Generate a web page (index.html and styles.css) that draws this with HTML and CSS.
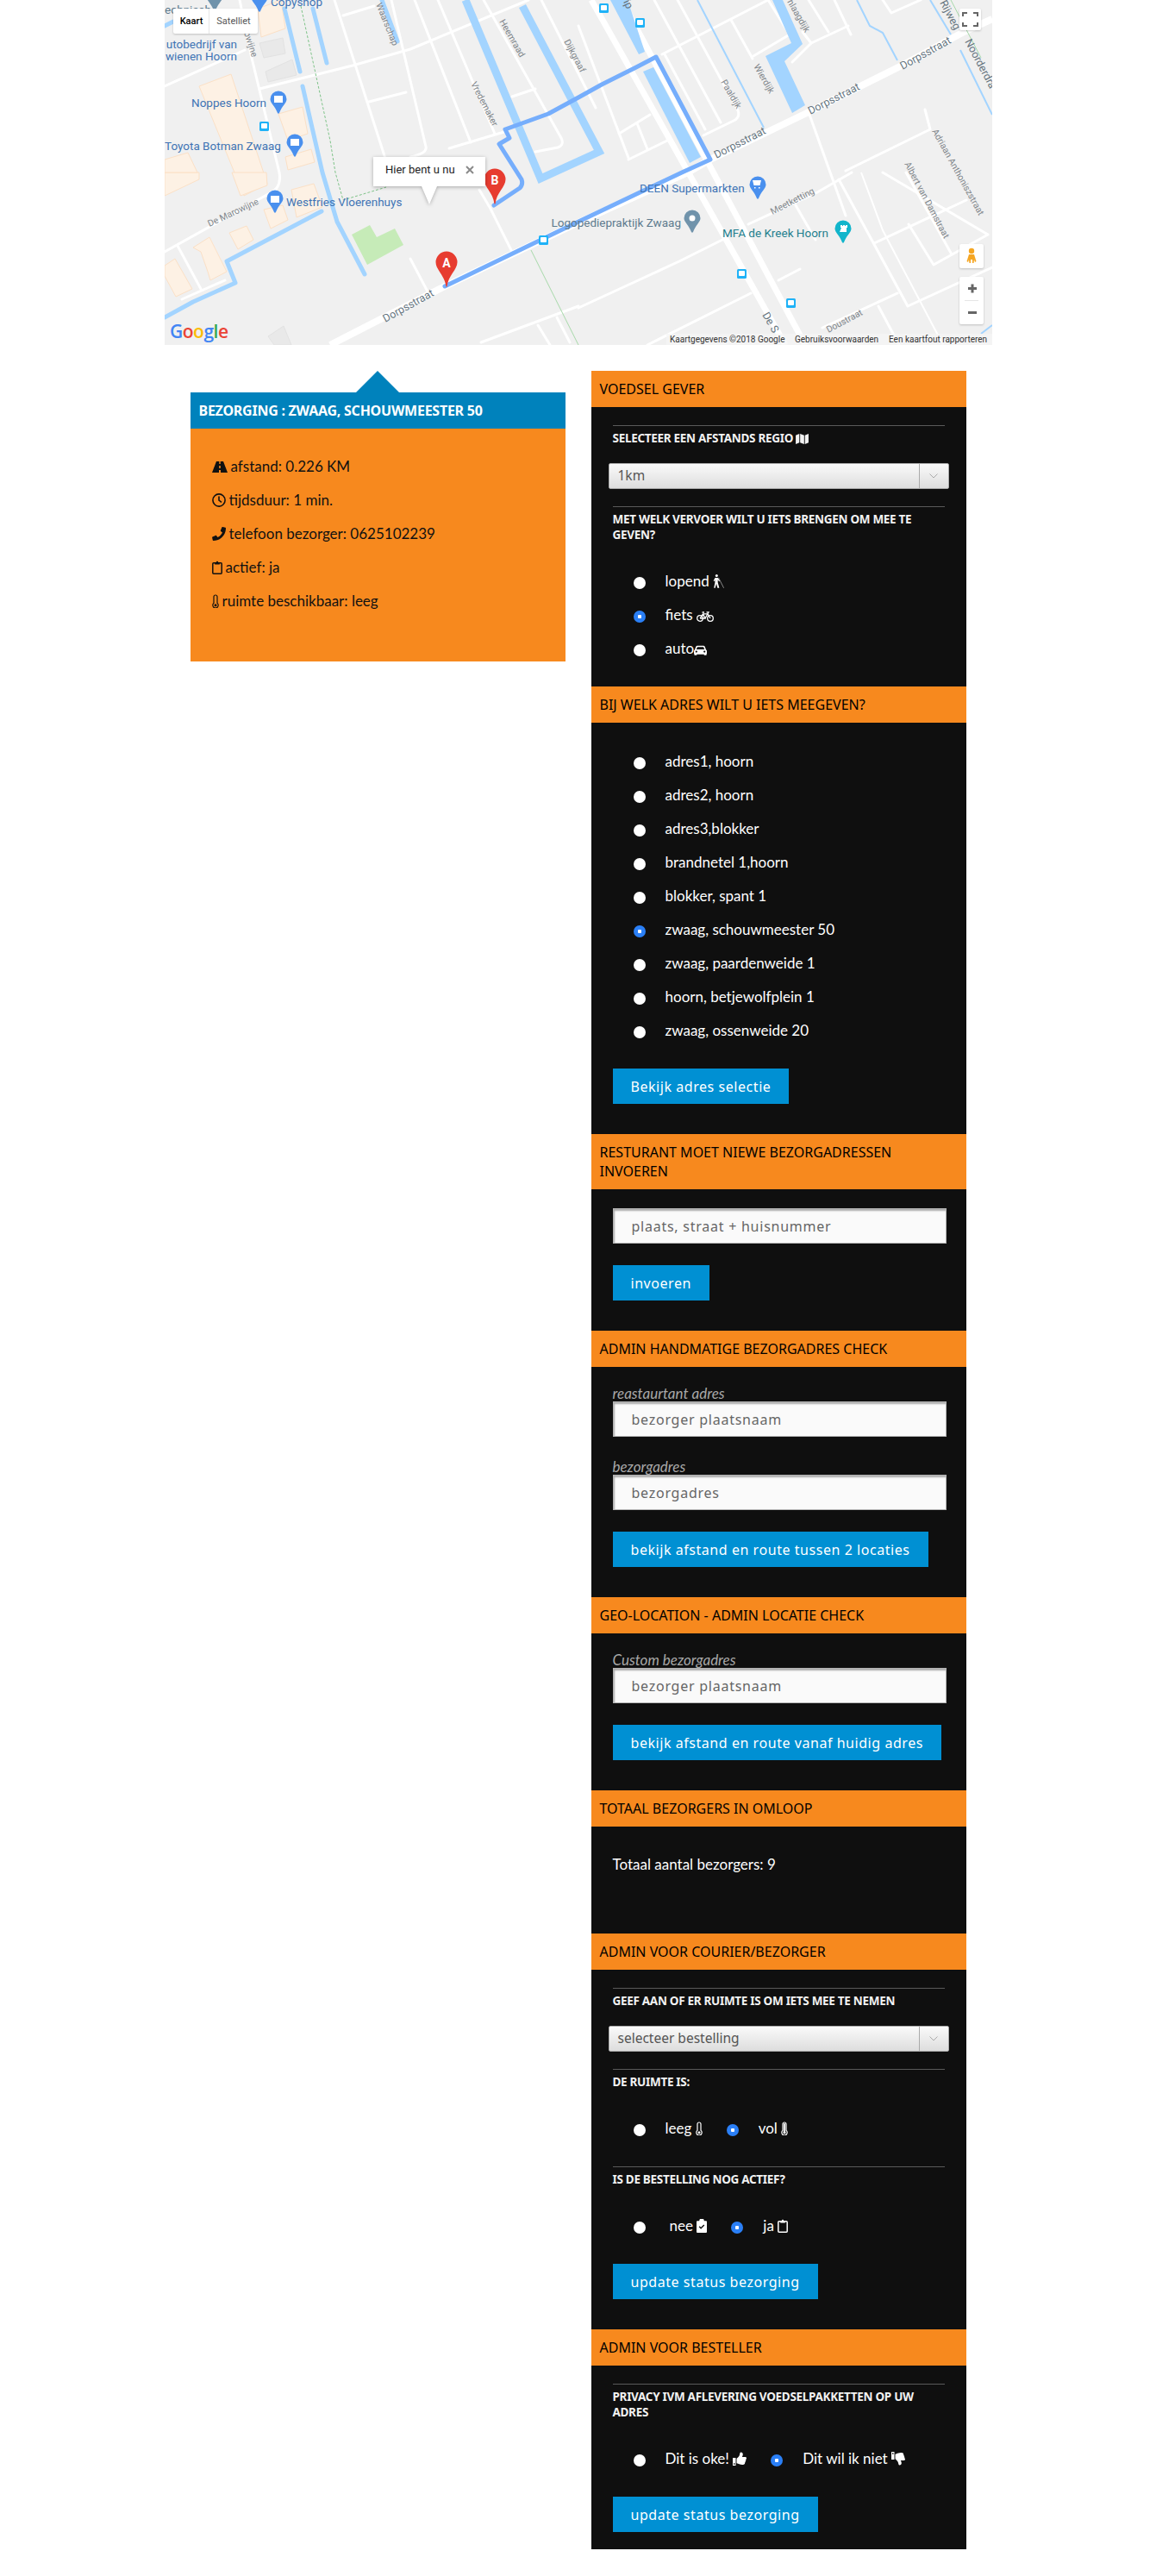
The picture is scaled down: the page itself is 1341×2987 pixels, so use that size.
FILE: index.html
```html
<!DOCTYPE html>
<html lang="en">
<head>
    <meta charset="UTF-8">
    <meta name="viewport" content="width=device-width, initial-scale=1.0">
    <title>Voedsel gever</title>
    <link rel="stylesheet" href="styles.css">
</head>

<body>
    <!-- icon set -->
    <svg class="icon-defs" aria-hidden="true">
        <symbol id="i-road" viewBox="0 0 18 14"><path fill-rule="evenodd" d="M5 1h8l5 13H0zM8.3 1v3h1.4V1zM8.2 6v3h1.6V6zM8 11v3h2v-3z"/></symbol>
        <symbol id="i-clock" viewBox="0 0 16 16"><circle cx="8" cy="8" r="7.1" fill="none" stroke="currentColor" stroke-width="1.6"/><path d="M8 3.6v4.6l3 2.1" fill="none" stroke="currentColor" stroke-width="1.6"/></symbol>
        <symbol id="i-phone" viewBox="0 0 16 16"><path d="M15.5.8 12.3.1c-.4-.1-.7.1-.9.4L9.9 4c-.1.3-.1.7.2.9l1.9 1.6c-1.1 2.4-3.1 4.4-5.5 5.5l-1.6-1.9c-.2-.3-.6-.3-.9-.2L.5 11.4c-.3.2-.5.5-.4.9l.7 3.2c.1.3.4.5.7.5C9.5 16 16 9.5 16 1.5c0-.3-.2-.6-.5-.7z"/></symbol>
        <symbol id="i-clipboard" viewBox="0 0 12 16"><rect x=".8" y="2.8" width="10.4" height="12.4" rx="1" fill="none" stroke="currentColor" stroke-width="1.5"/><path d="M3.2 2h1.6a1.2 1.2 0 0 1 2.4 0h1.6v2.4H3.2z"/></symbol>
        <symbol id="i-clipboard-check" viewBox="0 0 12 16"><path fill-rule="evenodd" d="M1 2.2h2.2a2.8 2.8 0 0 1 5.6 0H11a1 1 0 0 1 1 1V15a1 1 0 0 1-1 1H1a1 1 0 0 1-1-1V3.2a1 1 0 0 1 1-1zM2.700 9.300l2.400 2.500 4.200-4.300-1-1-3.200 3.200-1.400-1.400z"/></symbol>
        <symbol id="i-temp" viewBox="0 0 8 16"><path d="M2 3a2 2 0 0 1 4 0v7.300a3.200 3.200 0 1 1-4 0z" fill="none" stroke="currentColor" stroke-width="1.2"/><circle cx="4" cy="12.700" r="1.5"/></symbol>
        <symbol id="i-temp-full" viewBox="0 0 8 16"><path d="M2 3a2 2 0 0 1 4 0v7.300a3.200 3.200 0 1 1-4 0z" fill="none" stroke="currentColor" stroke-width="1.2"/><circle cx="4" cy="12.700" r="1.6"/><rect x="3.1" y="2.2" width="1.8" height="10"/></symbol>
        <symbol id="i-map" viewBox="0 0 16 14"><path d="M0 3 4.5 1v11L0 14zM5.5 1l5 2v11l-5-2zM11.500 3 16 1v11l-4.500 2z"/></symbol>
        <symbol id="i-blind" viewBox="0 0 13 16"><circle cx="4.3" cy="1.6" r="1.5"/><path d="M2.500 4h3.300l2.300 3.700-.9.6-1.500-2v3.200l1.700 6.200H5.300L4 10.800 2.700 15.700H1.200l1.200-6.300V6.500L1.500 8 .6 7.400z"/><path d="M6.500 3.800 12.600 15.800" fill="none" stroke="currentColor" stroke-width=".5"/></symbol>
        <symbol id="i-bicycle" viewBox="0 0 20 12"><g fill="none" stroke="currentColor" stroke-width="1.3"><circle cx="4" cy="8" r="3.3"/><circle cx="16" cy="8" r="3.3"/><path d="M4 8 7.500 2.800H13L16 8M7.500 2.800 10 8H4M6.500 1H9M11.500 .8H14L13 2.800M10 8 13 2.800"/></g></symbol>
        <symbol id="i-car" viewBox="0 0 16 12"><path fill-rule="evenodd" d="M1 5.500 2.500 1.500C2.800.8 3.400.4 4.200.4h7.600c.8 0 1.400.4 1.700 1.100L15 5.500c.6.300 1 .9 1 1.500v3c0 .4-.2.7-.5.900V12h-3v-1h-9v1h-3v-1.100C.2 10.700 0 10.400 0 10V7c0-.6.400-1.200 1-1.500zM3 5h10l-1-2.600c-.1-.3-.4-.4-.7-.4H4.700c-.3 0-.6.100-.7.400zM3 6.500a1.200 1.200 0 1 0 0 2.400 1.200 1.200 0 0 0 0-2.400zM13 6.500a1.200 1.200 0 1 0 0 2.400 1.200 1.200 0 0 0 0-2.400z"/></symbol>
        <symbol id="i-thumb" viewBox="0 0 16 16"><path fill-rule="evenodd" d="M0 7h3.500v9H0zM1 13.300v1.400h1.500v-1.400z"/><path d="M4.500 8.500c0-.5.200-.9.600-1.200C6.500 6 7.700 4.800 8 3.200 8.200 2 8.400.4 9.500.4c1.400 0 2.300 1 2.300 2.500 0 1-.5 2-1 3H14.500c.9 0 1.500.7 1.500 1.500 0 .6-.3 1.100-.8 1.400.3.800.1 1.600-.5 2 .2.800 0 1.500-.6 2 .1 1.300-.7 2.200-2.300 2.200H11c-2 0-3.800-.8-5-1.200-.9-.2-1.500-.4-1.500-1z"/></symbol>
        <symbol id="i-pin" viewBox="0 0 20 27"><path d="M10 .5A9.500 9.500 0 0 1 19.500 10C19.500 14.500 14.500 17 10.800 26.500H9.200C5.500 17 .5 14.500.5 10A9.500 9.500 0 0 1 10 .5z"/></symbol>
        <symbol id="i-marker" viewBox="0 0 26 42"><path d="M13 .5A12.500 12.500 0 0 1 25.500 13C25.500 22 15 28 13.500 41.500h-1C11 28 .5 22 .5 13A12.500 12.500 0 0 1 13 .5z"/></symbol>
    </svg>

    <div id="page">
        <!-- google map, everything in here has its own place on the canvas -->
        <svg class="map" viewBox="0 0 960 400" role="img" aria-label="Kaart">
            <rect class="map-bg" width="960" height="400"/>

            <g class="building">
                <path d="M40 100 77 86 119 213 92 227z"/>
                <path d="M132 132 160 124 166 155 143 163z"/>
                <path d="M140 182 170 173 174 188 143 197z"/>
                <path d="M108 10 135 0 140 33 112 43z"/>
                <path d="M78 200H118L119 215 88 227z"/>
                <path d="M0 200H40V208L0 227z"/>
                <path d="M0 185 27 177 38 200H0z"/>
                <path d="M147 220 173 213 183 240 153 252z"/>
                <path d="M115 243 137 238 143 255 123 265z"/>
                <path d="M75 270 95 262 103 278 85 289z"/>
                <path d="M33 287 52 275 72 315 53 325 50 315 42 292z"/>
                <path d="M0 308 12 300 32 335 13 344 0 320z"/>
            </g>
            <g class="building-grey">
                <path d="M110 50 137 44 140 62 115 67z"/>
                <path d="M117 83 148 69 153 87 120 95z"/>
                <path d="M120 390 138 378 147 400H127z"/>
            </g>
            <path class="park" d="M217 272 238 261 246 275 267 265 277 284 235 307z"/>

            <g class="road">
                <path d="M0 100 93 58"/>
                <path d="M110 103 218 76 285 57 422 0"/>
                <path d="M197 0 257 187"/>
                <path d="M263 0 303 170Q305 178 285 182"/>
                <path d="M290 0 355 165"/>
                <path d="M317 0 383 155"/>
                <path d="M330 172 397 152"/>
                <path d="M237 118 280 107"/>
                <path d="M207 18 243 7"/>
                <path d="M87 0 100 63 133 200Q136 218 122 224L0 292"/>
                <path d="M15 285 42 335"/>
                <path d="M20 347 70 325"/>
                <path d="M370 0 460 160Q464 168 456 171L430 176"/>
                <path d="M403 112 430 103"/>
                <path d="M437 0 500 125"/>
                <path d="M577 63 700 0 725 40 683 65"/>
                <path d="M568 0 645 142"/>
                <path d="M595 0 665 128Q668 136 660 140L625 157"/>
                <path d="M580 63 627 150"/>
                <path d="M657 23 682 68"/>
                <path d="M480 30 538 183"/>
                <path d="M527 155 563 133"/>
                <path d="M538 185 583 163"/>
                <path d="M548 143 560 173"/>
                <path d="M747 0 770 37"/>
                <path d="M777 0 796 40"/>
                <path d="M728 72 750 50 793 30"/>
                <path d="M740 37 750 50"/>
                <path d="M833 0 843 15 877 0"/>
                <path d="M480 357 597 303 647 278"/>
                <path d="M560 400 680 340"/>
                <path d="M712 325 737 312"/>
                <path d="M677 260 757 223 797 200"/>
                <path d="M790 198 888 150 882 127"/>
                <path d="M732 238 755 278"/>
                <path d="M782 208 862 355 960 310"/>
                <path d="M833 200 955 272 892 307 863 260"/>
                <path d="M823 282 930 232"/>
                <path d="M860 200 913 295"/>
                <path d="M763 380 850 340"/>
                <path d="M828 355 852 400"/>
                <path d="M367 397 480 355"/>
                <path d="M433 377 447 400"/>
                <path d="M455 368 470 397"/>
                <path d="M285 300 305 338"/>
                <path d="M365 220 378 242 402 290"/>
                <path d="M747 130 790 250"/>
            </g>
            <path class="road-thin" d="M808 200 833 267 903 400"/>
            <g class="road-main">
                <path d="M192 400 325 332 480 258 607 200 633 185 747 130 857 75 927 37 960 22"/>
            </g>
            <g class="road-wide">
                <path d="M495 0 720 400"/>
                <path d="M530 0 743 400"/>
            </g>

            <g class="water">
                <path d="M517 0H537L557 60 550 63z"/>
                <path d="M555 83 567 78 622 182 609 189z"/>
                <path d="M705 0H717L740 51 719 71 743 122 728 131 697 65 727 50z"/>
            </g>
            <path class="water-canal" d="M349 0 436 207 504 176 415 7"/>
            <g class="water-line">
                <path d="M139 10 157 83"/>
                <path d="M172 10 188 73"/>
                <path d="M160 100 183 200 200 257 232 318"/>
                <path d="M252 0 270 48"/>
                <path d="M182 245 72 303 82 328 33 350 0 368"/>
                <path d="M0 30 10 25"/>
            </g>
            <g class="water-thin">
                <path d="M618 0 695 148"/>
                <path d="M803 0 818 30 833 38 850 70"/>
                <path d="M888 0 912 40"/>
                <path d="M923 58 960 133"/>
                <path d="M947 387 960 377"/>
            </g>

            <path class="trail" d="M158 7 192 163 198 200 207 232 257 217"/>
            <path class="rail" d="M425 290 480 400"/>
            <path class="rail" d="M912 0 947 67"/>

            <path class="route" d="M382 238 412 218Q416 214 414 208L388 167 400 160 395 150 445 132 480 113 507 98 547 78 570 66 633 185 600 200 480 257 325 332"/>

            <!-- bus stops -->
            <g class="bus">
                <rect x="110" y="141" width="11" height="11" rx="1.5"/>
                <rect x="504" y="4" width="11" height="11" rx="1.5"/>
                <rect x="546" y="21" width="11" height="11" rx="1.5"/>
                <rect x="434" y="273" width="11" height="11" rx="1.5"/>
                <rect x="664" y="312" width="11" height="11" rx="1.5"/>
                <rect x="721" y="346" width="11" height="11" rx="1.5"/>
            </g>
            <g class="bus-glyph">
                <rect x="112" y="143" width="7" height="6" rx="1"/>
                <rect x="506" y="6" width="7" height="6" rx="1"/>
                <rect x="548" y="23" width="7" height="6" rx="1"/>
                <rect x="436" y="275" width="7" height="6" rx="1"/>
                <rect x="666" y="314" width="7" height="6" rx="1"/>
                <rect x="723" y="348" width="7" height="6" rx="1"/>
            </g>

            <!-- street names -->
            <g class="street">
                <text transform="translate(52 263) rotate(-25)">De Marowijne</text>
                <text transform="translate(92 38) rotate(72)">bwijne</text>
                <text transform="translate(245 5) rotate(68)">Waarschap</text>
                <text transform="translate(388 25) rotate(60)">Heemraad</text>
                <text transform="translate(463 48) rotate(62)">Dijkgraaf</text>
                <text transform="translate(355 97) rotate(63)">Vredemaker</text>
                <text transform="translate(645 95) rotate(60)">Paaldijk</text>
                <text transform="translate(683 77) rotate(60)">Wierdijk</text>
                <text transform="translate(722 2) rotate(60)">hlaagdijk</text>
                <text transform="translate(890 152) rotate(61)">Adriaan Anthoniszstraat</text>
                <text transform="translate(858 190) rotate(62)">Albert van Damstraat</text>
                <text transform="translate(705 249) rotate(-27)">Meetketting</text>
                <text transform="translate(770 386) rotate(-28)">Doustraat</text>
                <text class="street-big" transform="translate(899 3) rotate(62)">Rijweg</text>
                <text class="street-big" transform="translate(928 48) rotate(62)">Noorderdra</text>
                <text class="street-big" transform="translate(693 365) rotate(60)">De S</text>
                <text class="street-big" transform="translate(532 2) rotate(65)">ip</text>
                <text class="street-big" transform="translate(640 184) rotate(-27)">Dorpsstraat</text>
                <text class="street-big" transform="translate(749 133) rotate(-27)">Dorpsstraat</text>
                <text class="street-big" transform="translate(856 81) rotate(-29)">Dorpsstraat</text>
                <text class="street-big" transform="translate(256 374) rotate(-29)">Dorpsstraat</text>
            </g>

            <!-- places -->
            <g class="poi">
                <text x="123" y="7">Copyshop</text>
                <text class="poi-end" x="84" y="56">utobedrijf van</text>
                <text class="poi-end" x="84" y="70">wienen Hoorn</text>
                <text x="31" y="124">Noppes Hoorn</text>
                <text x="0" y="174">Toyota Botman Zwaag</text>
                <text x="141" y="239">Westfries Vloerenhuys</text>
                <text x="551" y="223">DEEN Supermarkten</text>
                <text class="poi-end poi-grey" x="599" y="263">Logopediepraktijk Zwaag</text>
                <text class="poi-teal" x="647" y="275">MFA de Kreek Hoorn</text>
                <text class="poi-grey" x="0" y="16">echnisch</text>
            </g>
            <g class="pin">
                <use href="#i-pin" x="100" y="-13" width="20" height="27"/>
                <use href="#i-pin" x="122" y="105" width="20" height="27"/>
                <use href="#i-pin" x="141" y="155" width="20" height="27"/>
                <use href="#i-pin" x="118" y="220" width="20" height="27"/>
                <use href="#i-pin" x="678" y="204" width="20" height="27"/>
            </g>
            <use class="pin-grey" href="#i-pin" x="602" y="243" width="20" height="27"/>
            <use class="pin-grey" href="#i-pin" x="48" y="-14" width="20" height="27"/>
            <use class="pin-teal" href="#i-pin" x="777" y="255" width="20" height="27"/>
            <g class="pin-glyph">
                <path d="M127 111h10v8h-10z"/>
                <path d="M146 161h10v8h-10z"/>
                <path d="M123 227h10v8h-10z"/>
                <path d="M682 209h10l-1.500 6h-7zM684 217h1.500v1.500H684zM689 217h1.500v1.500H689z"/>
                <circle cx="612" cy="253" r="3.5"/>
                <path d="M783 269h8v-5h1v-3h-2v1h-1v-1h-2v1h-1v-1h-2v3h1z"/>
            </g>

            <!-- route markers -->
            <g class="marker">
                <use href="#i-marker" x="314" y="291" width="26" height="42"/>
                <use href="#i-marker" x="370" y="195" width="26" height="42"/>
            </g>
            <text class="marker-text" x="327" y="310">A</text>
            <text class="marker-text" x="383" y="214">B</text>

            <!-- info window -->
            <path class="info" d="M242 182H372V216H316L307 237 298 216H242z"/>
            <text class="info-text" x="256" y="201">Hier bent u nu</text>
            <path class="info-close" d="M350 193 358 201M358 193 350 201"/>

            <!-- controls -->
            <rect class="ctrl" x="10" y="10" width="98" height="29" rx="2"/>
            <path class="ctrl-line" d="M51.5 10V39"/>
            <text class="ctrl-on" x="31" y="28">Kaart</text>
            <text class="ctrl-off" x="80" y="28">Satelliet</text>

            <rect class="ctrl" x="922" y="10" width="25" height="25" rx="2"/>
            <path class="ctrl-icon" d="M926 19V15H931M938 15H943V19M943 26V30H938M931 30H926V26"/>

            <rect class="ctrl" x="922" y="283" width="28" height="28" rx="2"/>
            <circle class="pegman" cx="936" cy="291" r="3.2"/>
            <path class="pegman" d="M933 295H939L941.500 303 940 304 939 301 938.500 305H937V301H935V305H933.500L933 301 932 304 930.500 303z"/>
            <rect class="ctrl" x="922" y="321" width="28" height="55" rx="2"/>
            <path class="ctrl-line" d="M928 348.500H944"/>
            <path class="ctrl-icon ctrl-sign" d="M932 334.500H942M937 329.500V339.500M932 362.500H942"/>

            <rect class="attrib-bg" x="582" y="387" width="378" height="13"/>
            <g class="attrib">
                <text x="586" y="396.500">Kaartgegevens ©2018 Google</text>
                <text x="731" y="396.500">Gebruiksvoorwaarden</text>
                <text x="840" y="396.500">Een kaartfout rapporteren</text>
            </g>

            <text class="logo" x="6" y="392"><tspan class="logo-b">G</tspan><tspan class="logo-r">o</tspan><tspan class="logo-y">o</tspan><tspan class="logo-b">g</tspan><tspan class="logo-g">l</tspan><tspan class="logo-r">e</tspan></text>
        </svg>

        <div class="columns">
            <!-- left: gekozen bezorging -->
            <div class="card">
                <div class="card-title">BEZORGING : ZWAAG, SCHOUWMEESTER 50</div>
                <ul class="card-list">
                    <li><svg class="icon icon-road"><use href="#i-road"/></svg> afstand: 0.226 KM</li>
                    <li><svg class="icon icon-round"><use href="#i-clock"/></svg> tijdsduur: 1 min.</li>
                    <li><svg class="icon icon-round"><use href="#i-phone"/></svg> telefoon bezorger: 0625102239</li>
                    <li><svg class="icon icon-clip"><use href="#i-clipboard"/></svg> actief: ja</li>
                    <li><svg class="icon icon-temp"><use href="#i-temp"/></svg> ruimte beschikbaar: leeg</li>
                </ul>
            </div>

            <!-- right: alle formulieren -->
            <div class="panel">
                <h2 class="section-title">VOEDSEL GEVER</h2>
                <div class="section-body section-flush">
                    <hr>
                    <h3 class="question">SELECTEER EEN AFSTANDS REGIO <svg class="icon icon-map"><use href="#i-map"/></svg></h3>
                    <div class="select">
                        <span class="select-value">1km</span>
                        <span class="select-arrow"><svg viewBox="0 0 10 6"><path d="M.5.5 5 5 9.500.5"/></svg></span>
                    </div>
                    <hr class="hr-after-select">
                    <h3 class="question">MET WELK VERVOER WILT U IETS BRENGEN OM MEE TE GEVEN?</h3>
                    <div class="options">
                        <label class="option"><input type="radio" name="vervoer"><span>lopend <svg class="icon icon-blind"><use href="#i-blind"/></svg></span></label>
                        <label class="option"><input type="radio" name="vervoer" checked><span>fiets <svg class="icon icon-bike"><use href="#i-bicycle"/></svg></span></label>
                        <label class="option"><input type="radio" name="vervoer"><span>auto<svg class="icon icon-car"><use href="#i-car"/></svg></span></label>
                    </div>
                </div>

                <h2 class="section-title">BIJ WELK ADRES WILT U IETS MEEGEVEN?</h2>
                <div class="section-body section-options">
                    <div class="options">
                        <label class="option"><input type="radio" name="adres"><span>adres1, hoorn</span></label>
                        <label class="option"><input type="radio" name="adres"><span>adres2, hoorn</span></label>
                        <label class="option"><input type="radio" name="adres"><span>adres3,blokker</span></label>
                        <label class="option"><input type="radio" name="adres"><span>brandnetel 1,hoorn</span></label>
                        <label class="option"><input type="radio" name="adres"><span>blokker, spant 1</span></label>
                        <label class="option"><input type="radio" name="adres" checked><span>zwaag, schouwmeester 50</span></label>
                        <label class="option"><input type="radio" name="adres"><span>zwaag, paardenweide 1</span></label>
                        <label class="option"><input type="radio" name="adres"><span>hoorn, betjewolfplein 1</span></label>
                        <label class="option"><input type="radio" name="adres"><span>zwaag, ossenweide 20</span></label>
                    </div>
                    <button class="btn" type="button">Bekijk adres selectie</button>
                </div>

                <h2 class="section-title">RESTURANT MOET NIEWE BEZORGADRESSEN INVOEREN</h2>
                <div class="section-body section-input-first">
                    <input class="field" type="text" placeholder="plaats, straat + huisnummer">
                    <button class="btn" type="button">invoeren</button>
                </div>

                <h2 class="section-title">ADMIN HANDMATIGE BEZORGADRES CHECK</h2>
                <div class="section-body">
                    <label class="field-label">reastaurtant adres</label>
                    <input class="field" type="text" placeholder="bezorger plaatsnaam">
                    <label class="field-label">bezorgadres</label>
                    <input class="field" type="text" placeholder="bezorgadres">
                    <button class="btn" type="button">bekijk afstand en route tussen 2 locaties</button>
                </div>

                <h2 class="section-title">GEO-LOCATION - ADMIN LOCATIE CHECK</h2>
                <div class="section-body">
                    <label class="field-label">Custom bezorgadres</label>
                    <input class="field" type="text" placeholder="bezorger plaatsnaam">
                    <button class="btn" type="button">bekijk afstand en route vanaf huidig adres</button>
                </div>

                <h2 class="section-title">TOTAAL BEZORGERS IN OMLOOP</h2>
                <div class="section-body section-total">
                    <p class="total">Totaal aantal bezorgers: 9</p>
                </div>

                <h2 class="section-title">ADMIN VOOR COURIER/BEZORGER</h2>
                <div class="section-body">
                    <hr>
                    <h3 class="question">GEEF AAN OF ER RUIMTE IS OM IETS MEE TE NEMEN</h3>
                    <div class="select">
                        <span class="select-value">selecteer bestelling</span>
                        <span class="select-arrow"><svg viewBox="0 0 10 6"><path d="M.5.5 5 5 9.500.5"/></svg></span>
                    </div>
                    <hr class="hr-after-select">
                    <h3 class="question">DE RUIMTE IS:</h3>
                    <div class="options options-inline">
                        <label class="option"><input type="radio" name="ruimte"><span>leeg <svg class="icon icon-temp"><use href="#i-temp"/></svg></span></label>
                        <label class="option"><input type="radio" name="ruimte" checked><span>vol <svg class="icon icon-temp"><use href="#i-temp-full"/></svg></span></label>
                    </div>
                    <hr>
                    <h3 class="question">IS DE BESTELLING NOG ACTIEF?</h3>
                    <div class="options options-inline">
                        <label class="option option-wide"><input type="radio" name="actief"><span>nee <svg class="icon icon-clip"><use href="#i-clipboard-check"/></svg></span></label>
                        <label class="option"><input type="radio" name="actief" checked><span>ja <svg class="icon icon-clip"><use href="#i-clipboard"/></svg></span></label>
                    </div>
                    <button class="btn" type="button">update status bezorging</button>
                </div>

                <h2 class="section-title">ADMIN VOOR BESTELLER</h2>
                <div class="section-body section-last">
                    <hr>
                    <h3 class="question">PRIVACY IVM AFLEVERING VOEDSELPAKKETTEN OP UW ADRES</h3>
                    <div class="options options-inline">
                        <label class="option"><input type="radio" name="privacy"><span>Dit is oke! <svg class="icon icon-round"><use href="#i-thumb"/></svg></span></label>
                        <label class="option"><input type="radio" name="privacy" checked><span>Dit wil ik niet <svg class="icon icon-round icon-flip"><use href="#i-thumb"/></svg></span></label>
                    </div>
                    <button class="btn" type="button">update status bezorging</button>
                </div>
            </div>
        </div>
    </div> <!-- end page -->
</body>

</html>
```

FILE: styles.css
```css
/* General */
body, h2, h3, p, ul, li, hr {
    margin: 0;
    padding: 0;
}

body {
    background: #ffffff;
    font-family: Lato, "Open Sans", sans-serif;
}

.icon-defs {
    display: none;
}

#page {
    width: 960px;
    margin: 0 auto;
    padding-bottom: 30px;
}

/* Map */
.map {
    display: block;
    width: 960px;
    height: 400px;
    font-family: Roboto, sans-serif;
}

.map-bg { fill: #f0f0f0; }
.building path { fill: #fdf1e4; stroke: #fbe0c6; stroke-width: 1; }
.building-grey path { fill: #e9e9e9; stroke: #e2e2e2; stroke-width: 1; }
.park { fill: #c6ebb8; }

.road path { fill: none; stroke: #ffffff; stroke-width: 3; stroke-linejoin: round; stroke-linecap: round; }
.road-thin { fill: none; stroke: #ffffff; stroke-width: 2; }
.road-main path { fill: none; stroke: #ffffff; stroke-width: 8; }
.road-wide path { fill: none; stroke: #ffffff; stroke-width: 7; }

.water path { fill: #a3d4ff; }
.water-canal { fill: none; stroke: #a3d4ff; stroke-width: 9; }
.water-line path { fill: none; stroke: #a3d4ff; stroke-width: 5; stroke-linecap: round; stroke-linejoin: round; }
.water-thin path { fill: none; stroke: #a3d4ff; stroke-width: 2; }

.trail { fill: none; stroke: #7ec388; stroke-width: 1; stroke-dasharray: 3 2; }
.rail { fill: none; stroke: #a6d8a9; stroke-width: 1; }
.route { fill: none; stroke: #76aefc; stroke-width: 5; stroke-linejoin: round; stroke-linecap: round; }

.bus { fill: #1fb2f7; }
.bus-glyph { fill: #ffffff; }

.street text { font-size: 10.5px; fill: #80868b; }
.street .street-big { font-size: 12.5px; fill: #66757f; }

.poi text { font-size: 13.5px; fill: #3f74b5; }
.poi .poi-end { text-anchor: end; }
.poi .poi-grey { fill: #5e7b8e; }
.poi .poi-teal { fill: #1f7f8e; }

.pin { fill: #4a90ee; }
.pin-grey { fill: #7093ab; }
.pin-teal { fill: #12b5cb; }
.pin-glyph { fill: #ffffff; }

.marker { fill: #e73c30; }
.marker-text { font-size: 14px; font-weight: 700; fill: #ffffff; text-anchor: middle; }

.info { fill: #ffffff; filter: drop-shadow(0 1px 2px rgba(0, 0, 0, 0.3)); }
.info-text { font-size: 13px; fill: #222222; }
.info-close { fill: none; stroke: #8a8a8a; stroke-width: 2; }

.ctrl { fill: #ffffff; filter: drop-shadow(0 1px 1px rgba(0, 0, 0, 0.2)); }
.ctrl-line { fill: none; stroke: #e6e6e6; stroke-width: 1; }
.ctrl-on { font-size: 11px; font-weight: 500; fill: #000000; text-anchor: middle; }
.ctrl-off { font-size: 11px; fill: #565656; text-anchor: middle; }
.ctrl-icon { fill: none; stroke: #666666; stroke-width: 2; }
.ctrl-sign { stroke-width: 3; }
.pegman { fill: #f5a623; }

.attrib-bg { fill: rgba(245, 245, 245, 0.75); }
.attrib text { font-size: 10px; fill: #333333; }

.logo { font-family: "Open Sans", sans-serif; font-size: 21px; font-weight: 600; letter-spacing: -0.5px; }
.logo-b { fill: #4285f4; }
.logo-r { fill: #ea4335; }
.logo-y { fill: #fbbc05; }
.logo-g { fill: #34a853; }

/* Two columns under the map */
.columns {
    display: grid;
    grid-template-columns: 435px 435px;
    column-gap: 30px;
    align-items: start;
    padding: 30px 30px 0;
}

/* Left card */
.card {
    position: relative;
    margin-top: 25px;
    background: #f7891e;
}

.card::before {
    content: "";
    position: absolute;
    top: -25px;
    left: 192px;
    border-left: 25px solid transparent;
    border-right: 25px solid transparent;
    border-bottom: 25px solid #0082bc;
}

.card-title {
    padding: 10px;
    background: #0082bc;
    color: #ffffff;
    font-family: "Noto Sans", sans-serif;
    font-size: 16px;
    font-weight: 700;
    line-height: 22px;
    letter-spacing: -0.25px;
}

.card-list {
    list-style: none;
    padding: 24px 25px 51px;
    font-size: 17px;
    color: #111111;
}

.card-list li {
    display: flex;
    align-items: center;
    gap: 4px;
    height: 39px;
}

/* Icons */
.icon {
    display: inline-block;
    fill: currentColor;
    vertical-align: -2px;
}

.icon-road { width: 18px; height: 14px; }
.icon-round { width: 16px; height: 16px; }
.icon-clip { width: 12px; height: 16px; }
.icon-temp { width: 8px; height: 16px; }
.icon-map { width: 15px; height: 13px; }
.icon-blind { width: 13px; height: 16px; }
.icon-bike { width: 20px; height: 12px; }
.icon-car { width: 15px; height: 12px; }
.icon-flip { transform: scaleY(-1); }

/* Right panel */
.panel {
    background: #0f0f0f;
}

.section-title {
    padding: 10px;
    background: #f7891e;
    color: #000000;
    font-family: "Noto Sans", sans-serif;
    font-size: 16px;
    font-weight: 400;
    line-height: 22px;
}

.section-body {
    padding: 21px 25px 35px;
}

.section-flush { padding-bottom: 0; }
.section-options { padding-top: 0; }
.section-input-first { padding-top: 22px; }
.section-total { height: 124px; box-sizing: border-box; padding-top: 34px; }
.section-last { padding-bottom: 20px; }

hr {
    border: 0;
    border-top: 1px solid #5a5a5a;
}

.hr-after-select {
    margin-top: 20px;
}

.question {
    margin-top: 5px;
    color: #f2f2f2;
    font-family: "Noto Sans", sans-serif;
    font-size: 13.5px;
    font-weight: 700;
    line-height: 18px;
    letter-spacing: -0.3px;
}

/* Select */
.select {
    display: flex;
    height: 30px;
    box-sizing: border-box;
    margin: 20px -5px 0;
    border: 1px solid #aaaaaa;
    border-radius: 2px;
    background: linear-gradient(#fafafa, #dddddd);
    color: #555555;
    font-family: "Noto Sans", sans-serif;
    font-size: 15.5px;
    line-height: 27px;
}

.select-value {
    flex: 1;
    padding-left: 10px;
}

.select-arrow {
    display: flex;
    align-items: center;
    justify-content: center;
    width: 33px;
    border-left: 1px solid #aaaaaa;
}

.select-arrow svg {
    width: 10px;
    height: 6px;
    fill: none;
    stroke: #aaaaaa;
    stroke-width: 1;
}

/* Radio lists */
.options {
    margin: 27px 0 23px;
    color: #ffffff;
    font-size: 17px;
}

.options-inline {
    display: flex;
    gap: 28px;
}

.option {
    display: flex;
    align-items: center;
    height: 39px;
    padding-left: 24px;
}

.options-inline .option {
    padding-left: 0;
}

.options-inline .option:first-child {
    padding-left: 24px;
}

.option input {
    appearance: none;
    flex: none;
    width: 14px;
    height: 14px;
    margin: 0 23px 0 0;
    border-radius: 50%;
    background: #ffffff;
}

.option input:checked {
    background: radial-gradient(circle, #ffffff 2px, #2a7ff6 2.5px);
}

.option span {
    padding-bottom: 4px;
}

.option-wide input {
    margin-right: 28px;
}

/* Inputs and buttons */
.field-label {
    display: block;
    color: #a8a8a8;
    font-size: 17px;
    font-style: italic;
    line-height: 19px;
}

.field {
    display: block;
    width: 387px;
    height: 41px;
    box-sizing: border-box;
    margin-bottom: 25px;
    padding: 0 0 0 21px;
    border: 1px solid #b5b5b5;
    border-radius: 0;
    background: #fafafa;
    box-shadow: inset 1px 2px 2px #aaaaaa;
    font-family: "Noto Sans", sans-serif;
    font-size: 16px;
    letter-spacing: 0.75px;
    outline: none;
}

.field::placeholder {
    color: #666666;
    opacity: 1;
}

.btn {
    display: block;
    height: 41px;
    padding: 0 21px;
    border: 0;
    background: #0090d3;
    color: #ffffff;
    font-family: "Noto Sans", sans-serif;
    font-size: 16px;
    letter-spacing: 0.55px;
}

.total {
    color: #ffffff;
    font-size: 17px;
    line-height: 20px;
}
```
